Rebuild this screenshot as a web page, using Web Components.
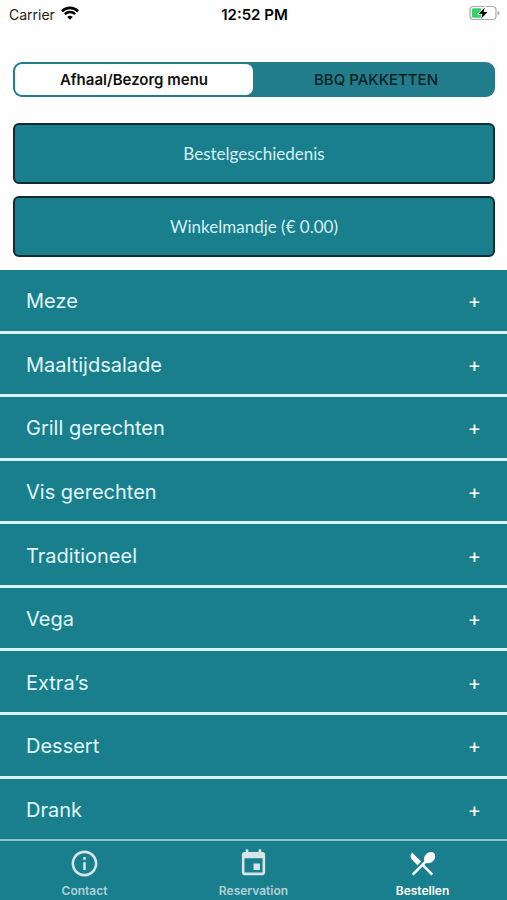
<!DOCTYPE html>
<html lang="nl">
<head>
<meta charset="utf-8">
<meta name="viewport" content="width=device-width, initial-scale=1">
<title>Bestellen</title>
<style>
    html, body {
        margin: 0;
        padding: 0;
    }
    body {
        --teal: #1a7f8d;
        --line: #d9f5f9;
        font-family: Inter, "Liberation Sans", sans-serif;
        background: #fefefe;
        color: #111;
    }
</style>
</head>
<body>
<order-app>
    <status-bar slot="status" carrier="Carrier" time="12:52 PM"></status-bar>
    <menu-switch slot="actions" first="Afhaal/Bezorg menu" second="BBQ PAKKETTEN"></menu-switch>
    <action-button slot="actions">Bestelgeschiedenis</action-button>
    <action-button slot="actions">Winkelmandje (€ 0.00)</action-button>
    <menu-row>Meze</menu-row>
    <menu-row>Maaltijdsalade</menu-row>
    <menu-row>Grill gerechten</menu-row>
    <menu-row>Vis gerechten</menu-row>
    <menu-row>Traditioneel</menu-row>
    <menu-row>Vega</menu-row>
    <menu-row>Extra’s</menu-row>
    <menu-row>Dessert</menu-row>
    <menu-row>Drank</menu-row>
    <tab-item slot="tabs" icon="info">Contact</tab-item>
    <tab-item slot="tabs" icon="event">Reservation</tab-item>
    <tab-item slot="tabs" icon="restaurant" active>Bestellen</tab-item>
</order-app>

<script>
const ICONS = {
    info: "M11 17h2v-6h-2v6zm1-15C6.48 2 2 6.48 2 12s4.48 10 10 10 10-4.48 10-10S17.52 2 12 2zm0 18c-4.41 0-8-3.59-8-8s3.59-8 8-8 8 3.59 8 8-3.59 8-8 8zM11 9h2V7h-2v2z",
    event: "M17 12h-5v5h5v-5zM16 1v2H8V1H6v2H5c-1.11 0-1.99.9-1.99 2L3 19c0 1.1.89 2 2 2h14c1.1 0 2-.9 2-2V5c0-1.1-.9-2-2-2h-1V1h-2zm3 18H5V8h14v11z",
    restaurant: "M8.1 13.34l2.83-2.83L3.91 3.5c-1.56 1.56-1.56 4.09 0 5.66l4.19 4.18zm6.78-1.81c1.53.71 3.68.21 5.27-1.38 1.91-1.91 2.28-4.65.81-6.12-1.46-1.46-4.2-1.1-6.12.81-1.59 1.59-2.09 3.74-1.38 5.27L3.7 19.87l1.41 1.41L12 14.41l6.88 6.88 1.41-1.41L13.41 13l1.47-1.47z"
};

class BaseElement extends HTMLElement {
    constructor() {
        super();
        this.attachShadow({ mode: "open" });
    }

    connectedCallback() {
        this.render();
    }

    render() {
        const template = document.createElement("template");
        template.innerHTML = this.getStyles() + this.getTemplate();
        this.shadowRoot.replaceChildren(template.content.cloneNode(true));
    }
}

class OrderApp extends BaseElement {
    getTemplate() {
        return `
            <slot name="status"></slot>
            <section><slot name="actions"></slot></section>
            <main><slot></slot></main>
            <nav><slot name="tabs"></slot></nav>
        `;
    }

    getStyles() {
        return `
            <style>
                :host {
                    display: flex;
                    flex-direction: column;
                    min-height: 100vh;
                }
                section {
                    display: flex;
                    flex-direction: column;
                    gap: 12px;
                    padding: 34px 12px 13px 13px;
                }
                main {
                    flex: 1;
                    display: flex;
                    flex-direction: column;
                    background: var(--teal);
                }
                nav {
                    display: flex;
                    background: var(--teal);
                }
            </style>
        `;
    }
}

class StatusBar extends BaseElement {
    getTemplate() {
        return `
            <div class="carrier">
                <span>${this.getAttribute("carrier")}</span>
                <svg width="18" height="14" viewBox="0 0 18 14" fill="none" stroke="#000" stroke-width="2.6" aria-hidden="true">
                    <path d="M1 5.2a11.4 11.4 0 0 1 16 0M3.9 8.1a7.3 7.3 0 0 1 10.2 0"/>
                    <path d="M9 13.8 6.2 11a4 4 0 0 1 5.6 0z" fill="#000" stroke="none"/>
                </svg>
            </div>
            <time>${this.getAttribute("time")}</time>
            <div class="battery">
                <svg width="31" height="16" viewBox="0 0 31 16" aria-hidden="true">
                    <rect x="1" y="1.5" width="26" height="13" rx="3.5" fill="#fff" stroke="#aaa" stroke-width="1.2"/>
                    <path d="M28.6 5.5q2 1 2 2.5t-2 2.5z" fill="#aaa"/>
                    <path d="M4.5 3.3H12v9.4H4.5q-1.7 0-1.7-1.7V5q0-1.7 1.7-1.7z" fill="#39cf68"/>
                    <path d="M15.8 2.5 9.8 8.8h3.7l-1.3 5 6.2-6.7h-3.8z" fill="#000" stroke="#fff" stroke-width="1.6" paint-order="stroke"/>
                </svg>
            </div>
        `;
    }

    getStyles() {
        return `
            <style>
                :host {
                    display: grid;
                    grid-template-columns: 1fr auto 1fr;
                    align-items: center;
                    height: 28px;
                    padding: 0 7px 0 9px;
                    font-size: 14px;
                    color: #222;
                }
                .carrier {
                    display: flex;
                    align-items: center;
                    gap: 6px;
                }
                .carrier svg {
                    margin-bottom: 2px;
                }
                time {
                    font-size: 15px;
                    font-weight: 600;
                    color: #000;
                }
                .battery {
                    display: flex;
                    justify-content: flex-end;
                    margin-bottom: 2px;
                }
            </style>
        `;
    }
}

class MenuSwitch extends BaseElement {
    getTemplate() {
        return `
            <button type="button" aria-pressed="true">${this.getAttribute("first")}</button>
            <button type="button" aria-pressed="false">${this.getAttribute("second")}</button>
        `;
    }

    getStyles() {
        return `
            <style>
                :host {
                    display: flex;
                    gap: 4px;
                    padding: 2px 0 2px 2px;
                    margin-bottom: 14px;
                    border-radius: 9px;
                    background: #217d8b;
                }
                button {
                    flex: 1 1 0;
                    height: 31px;
                    padding: 0;
                    border: 0;
                    border-radius: 7px;
                    background: none;
                    font: 500 15px/20px Inter, "Liberation Sans", sans-serif;
                    color: #0c1f22;
                }
                button[aria-pressed="true"] {
                    background: #fff;
                    font-weight: 600;
                    color: #111;
                }
            </style>
        `;
    }
}

class ActionButton extends BaseElement {
    getTemplate() {
        return `<button type="button"><slot></slot></button>`;
    }

    getStyles() {
        return `
            <style>
                :host {
                    display: block;
                }
                button {
                    display: block;
                    width: 100%;
                    height: 61px;
                    border: 2px solid #0d2b31;
                    border-radius: 6px;
                    background: var(--teal);
                    font: 400 17px/22px Lato, "Liberation Sans", sans-serif;
                    color: #d3f1f6;
                }
            </style>
        `;
    }
}

class MenuRow extends BaseElement {
    getTemplate() {
        return `
            <button type="button" aria-expanded="false">
                <span><slot></slot></span>
                <span class="plus">+</span>
            </button>
        `;
    }

    getStyles() {
        return `
            <style>
                :host {
                    flex: 1;
                    display: flex;
                    border-bottom: 3px solid var(--line);
                }
                :host(:last-of-type) {
                    border-bottom-width: 0;
                }
                button {
                    flex: 1;
                    display: flex;
                    align-items: center;
                    justify-content: space-between;
                    min-height: 60px;
                    padding: 2px 26px 0;
                    border: 0;
                    background: none;
                    font: 400 20px/24px Inter, "Liberation Sans", sans-serif;
                    color: #e0f8fb;
                }
                .plus {
                    font-size: 20px;
                    color: #fff;
                }
            </style>
        `;
    }
}

class TabItem extends BaseElement {
    getTemplate() {
        return `
            <a href="#${this.getAttribute("icon")}">
                <svg viewBox="0 0 24 24" fill="currentColor" aria-hidden="true">
                    <path d="${ICONS[this.getAttribute("icon")]}"/>
                </svg>
                <span><slot></slot></span>
            </a>
        `;
    }

    getStyles() {
        return `
            <style>
                :host {
                    flex: 1;
                    border-top: 2px solid #8cc6ce;
                    color: #d5e5e8;
                }
                :host([active]) {
                    color: #fff;
                }
                a {
                    display: flex;
                    flex-direction: column;
                    align-items: center;
                    gap: 4px;
                    padding: 7px 0 1px;
                    font-size: 12px;
                    font-weight: 600;
                    line-height: 16px;
                    color: inherit;
                    text-decoration: none;
                }
                span {
                    opacity: .8;
                }
                :host([active]) span {
                    opacity: 1;
                }
                svg {
                    width: 31px;
                    height: 31px;
                }
            </style>
        `;
    }
}

customElements.define("order-app", OrderApp);
customElements.define("status-bar", StatusBar);
customElements.define("menu-switch", MenuSwitch);
customElements.define("action-button", ActionButton);
customElements.define("menu-row", MenuRow);
customElements.define("tab-item", TabItem);
</script>
</body>
</html>
